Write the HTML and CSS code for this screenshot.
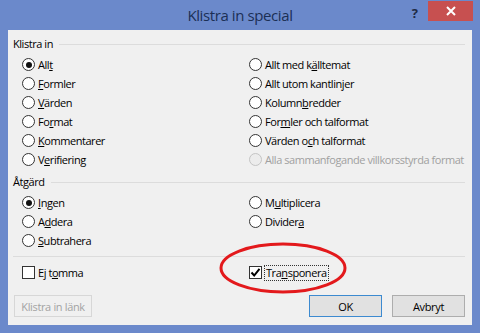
FILE: index.html
```html
<!DOCTYPE html>
<html lang="sv">
<head>
<meta charset="utf-8">
<title>Klistra in special</title>
<link rel="stylesheet" href="styles.css">
</head>
<body>
<div class="window">
  <div class="titlebar">
    <span></span>
    <span class="title">Klistra in special</span>
    <div class="controls">
      <span class="help">?</span>
      <span class="close"><svg width="10" height="10" viewBox="0 0 10 10"><path d="M1 1L9 9M9 1L1 9" stroke="#fff" stroke-width="2"/></svg></span>
    </div>
  </div>
  <div class="client">
    <div class="group-label"><span>Klistra in</span></div>
    <div class="options six">
      <div class="opt"><span class="radio checked"></span><span>All<u>t</u></span></div>
      <div class="opt"><span class="radio"></span><span>Allt med k<u>ä</u>lltemat</span></div>
      <div class="opt"><span class="radio"></span><span><u>F</u>ormler</span></div>
      <div class="opt"><span class="radio"></span><span>Allt utom kantlin<u>j</u>er</span></div>
      <div class="opt"><span class="radio"></span><span><u>V</u>ärden</span></div>
      <div class="opt"><span class="radio"></span><span>Kolumn<u>b</u>redder</span></div>
      <div class="opt"><span class="radio"></span><span>Fo<u>r</u>mat</span></div>
      <div class="opt"><span class="radio"></span><span>For<u>m</u>ler och talformat</span></div>
      <div class="opt"><span class="radio"></span><span><u>K</u>ommentarer</span></div>
      <div class="opt"><span class="radio"></span><span>Värden o<u>c</u>h talformat</span></div>
      <div class="opt"><span class="radio"></span><span>V<u>e</u>rifiering</span></div>
      <div class="opt disabled"><span class="radio"></span><span>Alla sammanfogande villkorsstyrda format</span></div>
    </div>
    <div class="group-label second"><span>Åtgärd</span></div>
    <div class="options three">
      <div class="opt"><span class="radio checked"></span><span><u>I</u>ngen</span></div>
      <div class="opt"><span class="radio"></span><span>M<u>u</u>ltiplicera</span></div>
      <div class="opt"><span class="radio"></span><span>A<u>d</u>dera</span></div>
      <div class="opt"><span class="radio"></span><span>Divider<u>a</u></span></div>
      <div class="opt"><span class="radio"></span><span><u>S</u>ubtrahera</span></div>
      <div class="opt"></div>
    </div>
    <div class="separator"></div>
    <div class="options checks">
      <div class="opt"><span class="check"></span><span>Ej t<u>o</u>mma</span></div>
      <div class="opt"><span class="check"><svg width="11" height="11" viewBox="0 0 11 11"><path d="M1.5 5.5L4.2 8.5L9.5 1.8" fill="none" stroke="#000" stroke-width="2"/></svg></span><span class="focus">Tra<u>n</u>sponera</span></div>
    </div>
    <div class="buttons">
      <button class="btn disabled">Klistra in länk</button>
      <span class="spacer"></span>
      <button class="btn default">OK</button>
      <button class="btn">Avbryt</button>
    </div>
    <svg class="mark" width="130" height="54" viewBox="0 0 130 54"><ellipse cx="65" cy="27" rx="62" ry="24" fill="none" stroke="#e3191c" stroke-width="3"/></svg>
  </div>
</div>
</body>
</html>
```
FILE: styles.css
```css
* { box-sizing: border-box; }
html, body { margin: 0; padding: 0; }
body {
  width: 480px;
  height: 333px;
  overflow: hidden;
  background: #6b89cb;
  font-family: "Open Sans", "Noto Sans", sans-serif;
}
.window {
  width: 480px;
  height: 333px;
  display: flex;
  flex-direction: column;
  background: #6b89cb;
}
.titlebar {
  height: 30px;
  display: grid;
  grid-template-columns: 1fr auto 1fr;
  align-items: start;
}
.title {
  font-size: 15px;
  line-height: 30px;
  color: #1b2f55;
  letter-spacing: -0.4px;
}
.controls {
  display: flex;
  justify-content: flex-end;
  align-items: flex-start;
}
.help {
  font-size: 13px;
  font-weight: bold;
  color: #1e2a44;
  line-height: 14px;
  margin-top: 6px;
  margin-right: 10px;
}
.close {
  width: 45px;
  height: 20px;
  margin-top: 1px;
  margin-right: 7px;
  background: #c75050;
  display: flex;
  align-items: center;
  justify-content: center;
}
.client {
  position: relative;
  flex: 1;
  margin: 0 8px 8px 8px;
  background: #f0f0f0;
  padding: 6px 7px 8px 5px;
  font-size: 11px;
  color: #000;
  letter-spacing: -0.45px;
}
.group-label {
  height: 16px;
  display: flex;
  align-items: center;
  gap: 6px;
  line-height: 16px;
}
.group-label::after {
  content: "";
  flex: 1;
  height: 1px;
  background: #dcdcdc;
}
.group-label.second { margin-top: 5px; }
.options {
  display: grid;
  grid-template-columns: 227px 1fr;
  grid-auto-rows: 19px;
  padding-left: 9px;
}
.options.six { margin-top: 3px; }
.options.three { margin-top: 3px; }
.options.checks { margin-top: 6px; }
.opt {
  display: flex;
  align-items: center;
  gap: 3px;
  white-space: nowrap;
}
.opt u { text-decoration: underline; text-underline-offset: 1px; }
.radio {
  width: 13px;
  height: 13px;
  border-radius: 50%;
  border: 1px solid #333;
  background: #fff;
  display: flex;
  align-items: center;
  justify-content: center;
  flex: none;
}
.radio.checked::after {
  content: "";
  width: 6px;
  height: 6px;
  border-radius: 50%;
  background: #111;
}
.opt.disabled { color: #a0a0a0; }
.opt.disabled .radio { border-color: #c4c4c4; background: #ececec; }
.check {
  width: 13px;
  height: 13px;
  border: 1px solid #333;
  background: #fff;
  flex: none;
  display: flex;
  align-items: center;
  justify-content: center;
}
.focus {
  outline: 1px dotted #333;
  padding: 0 1px;
  line-height: 14px;
}
.separator {
  height: 1px;
  margin: 6px 0 0 0;
  background: #dcdcdc;
}
.buttons {
  display: flex;
  gap: 10px;
  margin-top: 13px;
  padding-left: 1px;
}
.spacer { flex: 1; }
.btn {
  height: 22px;
  width: 73px;
  font-family: inherit;
  font-size: 11px;
  letter-spacing: -0.35px;
  background: #e1e1e1;
  border: 1px solid #adadad;
  color: #000;
  padding: 0;
}
.btn.default { border-color: #3c8ad0; }
.btn.disabled {
  width: 78px;
  color: #a3a3a3;
  background: #f0f0f0;
  border-color: #d7d7d7;
}
.mark {
  position: absolute;
  left: 210px;
  top: 211px;
}
```
